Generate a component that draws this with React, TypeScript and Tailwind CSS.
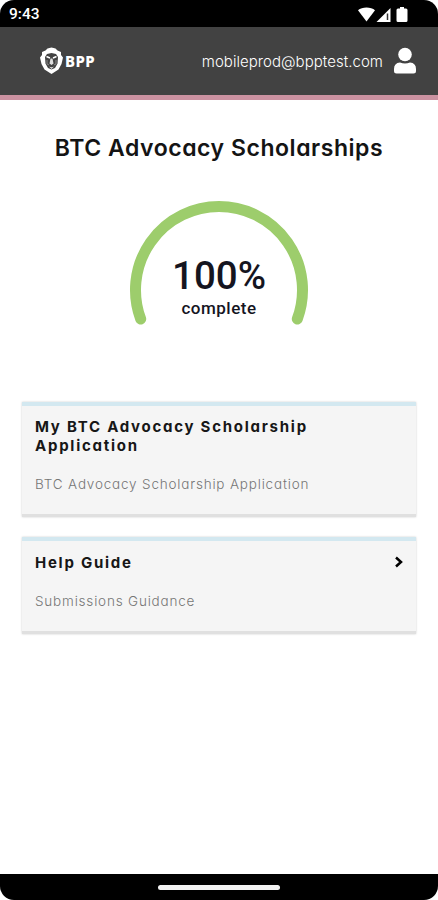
import React from "react";

function StatusBar() {
  return (
    <div className="flex h-[27px] shrink-0 items-center justify-between bg-black pt-[2px] pr-[29px] pl-[9px] text-white">
      <span className="font-[Roboto] text-[15.5px] font-medium leading-none">9:43</span>
      <svg width="52" height="16" viewBox="0 0 52 16" fill="#fff">
        <path d="M1 3.2C5 -.3 14 -.3 18 3.2L9.500 14.500Z" />
        <path d="M19.500 15 33.500 1V15Z" />
        <path d="M30.500 6.500V13" stroke="#333" strokeWidth="1.500" />
        <path d="M43 0h4v1.500h2q1.500 0 1.500 1.500v10.500q0 1.500-1.500 1.500h-8q-1.500 0-1.500-1.500V3q0-1.500 1.500-1.500h2Z" />
      </svg>
    </div>
  );
}

function Header() {
  return (
    <header className="flex h-[73px] shrink-0 items-center border-b-[5px] border-[#cb92a1] bg-[#424242] pr-[21px] pl-[39px] text-white">
      <svg width="25" height="28" viewBox="0 0 25 28">
        <path d="M8.500 1.500 12.500 .5 16.500 1.500 18.500 3.500 22 5 22 8 24 10.500 22.500 17 19.500 22.500 12.500 27 5.500 22.500 2.500 17 1 10.500 3 8 3 5 6.500 3.500Z" fill="#fff" />
        <path d="M8 7 12.500 6 17 7 19 10 18.500 16.500 16 21 12.500 22.500 9 21 6.500 16.500 6 10Z" fill="#424242" />
        <path d="M7.500 9.500 11 11M17.500 9.500 14 11" stroke="#fff" strokeWidth="1.400" />
        <path d="M11.500 11.500h2l1 5-2 1.500-2-1.500ZM10 19.500q2.500 1.500 5 0l-2.500 2.500Z" fill="#ddd" />
        <path d="M8 13v4l2 1M17 13v4l-2 1" fill="none" stroke="#999" strokeWidth=".8" />
      </svg>
      <span className="ml-[1px] font-['Noto_Sans'] text-[15px] font-extrabold leading-none tracking-[0.400px]">BPP</span>
      <span className="ml-auto font-[Inter] text-[15px] font-light leading-none tracking-[0.040px] [font-feature-settings:'cv11']">mobileprod@bpptest.com</span>
      <svg className="ml-[10px]" width="24" height="28" viewBox="0 0 24 28" fill="#fff">
        <circle cx="12" cy="7.500" r="6.800" />
        <path d="M1 24v-2q0-6 6-6.500 5 2 10 0 6 .5 6 6.500v2q0 2.500-2.500 2.500h-17Q1 26.500 1 24Z" />
      </svg>
    </header>
  );
}

function ProgressArc() {
  return (
    <div className="mx-auto mt-[37px] grid h-[128px] w-[182px] justify-items-center">
      <svg className="col-start-1 row-start-1" width="182" height="128" viewBox="0 0 182 128">
        <path d="M12.700 119A83.500 83.500 0 1 1 169.300 119" fill="none" stroke="#9dcd6c" strokeWidth="11" strokeLinecap="round" />
      </svg>
      <div className="col-start-1 row-start-1 flex flex-col items-center pt-[56px] font-[Roboto] text-[#15151f]">
        <span className="text-[38.500px] font-medium leading-[40px]">100%</span>
        <span className="mt-[2px] text-[17px] font-medium leading-[20px] tracking-[0.500px]">complete</span>
      </div>
    </div>
  );
}

type CardProps = {
  title: React.ReactNode;
  detail: string;
  arrow?: boolean;
  className: string;
};

function Card({ title, detail, arrow, className }: CardProps) {
  return (
    <section className={`mx-[22px] border-t-4 border-b-[3px] border-t-[#d3e8f0] border-b-[#e0e0e0] bg-[#f5f5f5] px-[13px] shadow-[0_0_2px_#cccccc] ${className}`}>
      <div className="flex items-start justify-between">
        <h2 className="whitespace-nowrap font-[Inter] text-[15px] font-bold leading-[19px] tracking-[1.740px] text-[#171717] [font-feature-settings:'cv11']">{title}</h2>
        {arrow && (
          <svg className="mt-[3px] -mr-px" width="10" height="12" viewBox="0 0 10 12">
            <path d="M2 1.500 7 6 2 10.500" fill="none" stroke="#000" strokeWidth="2.500" />
          </svg>
        )}
      </div>
      <p className="mt-[20px] whitespace-nowrap font-[Inter] text-[13.500px] font-light leading-[19px] tracking-[0.810px] text-[#757575] [font-feature-settings:'cv11']">{detail}</p>
    </section>
  );
}

export default function App() {
  return (
    <div className="h-[900px] w-[438px] bg-white">
      <div className="flex h-full flex-col overflow-hidden rounded-[14px] bg-white">
        <StatusBar />
        <Header />
        <main className="flex flex-1 flex-col">
          <h1 className="mt-[33px] whitespace-nowrap text-center font-[Inter] text-[23px] font-semibold leading-[30px] tracking-[0.540px] text-[#141414] [font-feature-settings:'cv11']">BTC Advocacy Scholarships</h1>
          <ProgressArc />
          <Card className="mt-[74px] h-[115px] pt-[11px]" title={<>My BTC Advocacy Scholarship<br />Application</>} detail="BTC Advocacy Scholarship Application" />
          <Card className="mt-[20px] h-[97px] pt-[12px]" title="Help Guide" detail="Submissions Guidance" arrow />
        </main>
        <footer className="flex h-[26px] shrink-0 items-center justify-center bg-black">
          <div className="h-[5px] w-[122px] rounded-full bg-[#f2f2f2]" />
        </footer>
      </div>
    </div>
  );
}
